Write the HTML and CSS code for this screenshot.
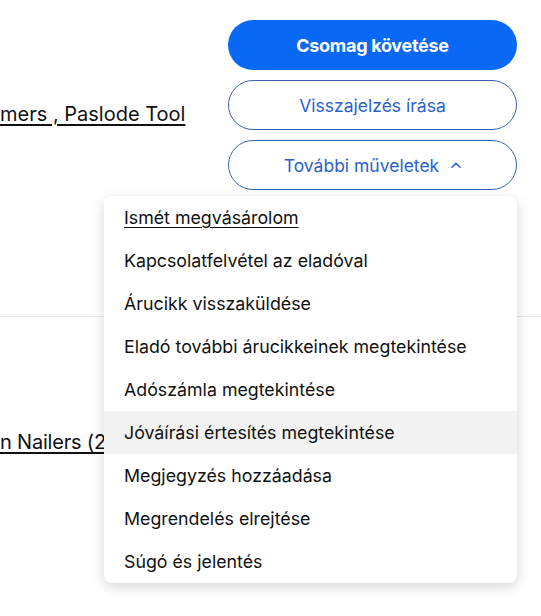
FILE: index.html
```html
<!DOCTYPE html>
<html lang="hu">
<head>
<meta charset="utf-8">
<link rel="stylesheet" href="styles.css">
</head>
<body>
<div class="page">
  <section class="order">
    <div class="item-title"><a href="#">mers , Paslode Tool</a></div>
    <div class="actions">
      <button class="btn btn-primary">Csomag követése</button>
      <button class="btn btn-secondary">Visszajelzés írása</button>
      <div class="more">
        <button class="btn btn-secondary btn-more">További műveletek
          <svg class="chev" width="10" height="6" viewBox="0 0 10 6"><path d="M1 5.2L5 1.2L9 5.2" fill="none" stroke="currentColor" stroke-width="1.5" stroke-linecap="round" stroke-linejoin="round"/></svg>
        </button>
        <ul class="menu">
          <li class="menu-item focused">Ismét megvásárolom</li>
          <li class="menu-item">Kapcsolatfelvétel az eladóval</li>
          <li class="menu-item">Árucikk visszaküldése</li>
          <li class="menu-item">Eladó további árucikkeinek megtekintése</li>
          <li class="menu-item">Adószámla megtekintése</li>
          <li class="menu-item hover">Jóváírási értesítés megtekintése</li>
          <li class="menu-item">Megjegyzés hozzáadása</li>
          <li class="menu-item">Megrendelés elrejtése</li>
          <li class="menu-item">Súgó és jelentés</li>
        </ul>
      </div>
    </div>
  </section>
  <section class="order second">
    <div class="item-title"><a href="#">n Nailers (2-</a></div>
  </section>
</div>
</body>
</html>
```
FILE: styles.css
```css
html, body {
  margin: 0;
  padding: 0;
  background: #fff;
}
body {
  font-family: Inter, "Noto Sans", "Liberation Sans", sans-serif;
  color: #111;
  width: 541px;
  height: 616px;
  overflow: hidden;
}
.page {
  display: flex;
  flex-direction: column;
}
.order {
  display: flex;
  justify-content: space-between;
  padding: 20px 24px 0 0;
  height: 296px;
  border-bottom: 1px solid #e5e5e5;
  box-sizing: content-box;
}
.order.second {
  border-bottom: none;
  padding-top: 0;
}
.item-title {
  padding-top: 81px;
  font-size: 20px;
  line-height: 26px;
  white-space: nowrap;
}
.second .item-title {
  padding-top: 112px;
  letter-spacing: -0.2px;
}
.item-title a {
  color: #111;
  text-decoration: underline;
  text-underline-offset: 3px;
}
.actions {
  width: 289px;
  display: flex;
  flex-direction: column;
  gap: 10px;
}
.btn {
  height: 50px;
  border-radius: 25px;
  font-family: inherit;
  font-size: 17.5px;
  display: flex;
  align-items: center;
  justify-content: center;
  width: 100%;
  cursor: pointer;
}
.btn-primary {
  background: #0968f6;
  color: #fff;
  border: none;
  font-weight: 700;
  font-size: 18px;
  letter-spacing: -0.3px;
}
.btn-secondary {
  background: #fff;
  color: #2a5fd0;
  border: 1px solid #3563b0;
}
.btn-more {
  padding-left: 6px;
}
.chev {
  margin-left: 12px;
}
.more {
  position: relative;
}
.menu {
  position: absolute;
  top: 56px;
  right: 0;
  width: 413px;
  margin: 0;
  padding: 0;
  list-style: none;
  background: #fff;
  border-radius: 8px;
  box-shadow: 0 4px 14px rgba(0, 0, 0, 0.16);
  z-index: 5;
  overflow: hidden;
}
.menu-item {
  height: 43px;
  display: flex;
  align-items: center;
  padding-left: 20px;
  font-size: 17.8px;
  color: #111;
}
.menu-item.focused {
  text-decoration: underline;
  text-underline-offset: 3px;
}
.menu-item.hover {
  background: #f2f2f2;
}
```
